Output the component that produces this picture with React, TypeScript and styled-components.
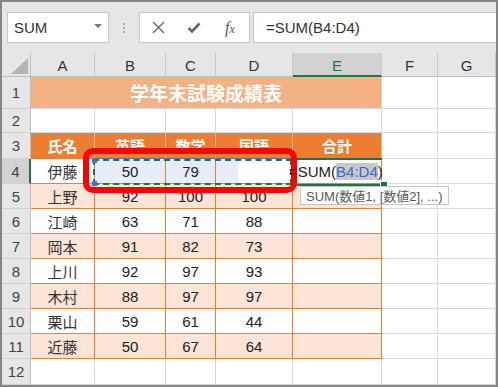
import React from "react";
import styled, { createGlobalStyle } from "styled-components";

const FONT = `"Liberation Sans", "Noto Sans CJK JP", sans-serif`;
const JP = `"Noto Sans CJK JP", "Liberation Sans", sans-serif`;

const GREEN = "#217346";
const ORANGE = "#ed7d31";
const PEACH = "#fce4d6";
const TITLE = "#f4b183";
const GRID = "#d9d9d9";

const GlobalStyle = createGlobalStyle`
  body { margin: 0; background: #fff; }
  * { box-sizing: border-box; }
`;

const Frame = styled.div`
  width: 498px;
  height: 387px;
  border: 2px solid #858585;
  background: #fff;
  overflow: hidden;
  font-family: ${FONT};
`;

const Toolbar = styled.div`
  height: 51px;
  background: #e6e6e6;
  display: flex;
  align-items: flex-start;
  padding: 10px 0 0 5px;
`;

const NameBox = styled.div`
  width: 102px;
  height: 31px;
  background: #fff;
  border: 1px solid #c6c6c6;
  display: flex;
  align-items: center;
  justify-content: space-between;
  padding: 0 6px 0 6px;
  font-size: 15px;
  color: #333;
`;

const Caret = styled.span`
  width: 0;
  height: 0;
  border-left: 4px solid transparent;
  border-right: 4px solid transparent;
  border-top: 4px solid #777;
  margin-bottom: 3px;
`;

const Grip = styled.div`
  width: 30px;
  height: 31px;
  display: flex;
  flex-direction: column;
  align-items: center;
  justify-content: center;
  gap: 2px;
  span {
    width: 2px;
    height: 2px;
    background: #aaa;
  }
`;

const IconBox = styled.div`
  width: 111px;
  height: 31px;
  background: #fff;
  border: 1px solid #c6c6c6;
  display: flex;
  align-items: center;
`;

const IconSlot = styled.div`
  width: 36px;
  height: 100%;
  display: flex;
  align-items: center;
  justify-content: center;
  color: #666;
`;

const Fx = styled.span`
  font-family: "Liberation Serif", serif;
  font-style: italic;
  font-size: 16px;
  color: #555;
  small {
    font-size: 12px;
  }
`;

const FormulaBox = styled.div`
  flex: 1;
  height: 31px;
  margin-left: 3px;
  background: #fff;
  border: 1px solid #c6c6c6;
  border-right: none;
  display: flex;
  align-items: center;
  padding-left: 12px;
  font-size: 15px;
  color: #333;
`;

const Sheet = styled.div`
  position: relative;
  display: grid;
  grid-template-columns: 29px 64px 71px 50px 77px 89px 56px 58px;
  grid-template-rows: 24px 32px 24px 26px repeat(8, 25px) 26px;
`;

const Corner = styled.div`
  background: #e6e6e6;
  border-right: 1px solid #bdbdbd;
  border-bottom: 1px solid #bdbdbd;
  display: flex;
  align-items: flex-end;
  justify-content: flex-end;
  padding: 0 2px 2px 0;
  span {
    width: 0;
    height: 0;
    border-left: 17px solid transparent;
    border-bottom: 16px solid #b4b4b4;
  }
`;

const ColHead = styled.div<{ $active?: boolean }>`
  background: ${(p) => (p.$active ? "#d2d2d2" : "#e6e6e6")};
  border-right: 1px solid #c8c8c8;
  border-bottom: ${(p) => (p.$active ? `2px solid ${GREEN}` : "1px solid #bdbdbd")};
  color: ${(p) => (p.$active ? GREEN : "#333")};
  display: flex;
  align-items: center;
  justify-content: center;
  font-size: 15px;
  padding-top: 2px;
`;

const RowHead = styled.div<{ $active?: boolean }>`
  background: ${(p) => (p.$active ? "#d2d2d2" : "#e6e6e6")};
  border-right: ${(p) => (p.$active ? `2px solid ${GREEN}` : "1px solid #bdbdbd")};
  border-bottom: 1px solid #d0d0d0;
  color: #444;
  display: flex;
  align-items: center;
  justify-content: center;
  font-size: 15px;
`;

const Cell = styled.div<{ $bg?: string; $line?: string; $left?: boolean }>`
  display: flex;
  align-items: center;
  justify-content: ${(p) => (p.$left ? "flex-start" : "center")};
  background: ${(p) => p.$bg ?? "#fff"};
  border-right: 1px solid ${(p) => p.$line ?? GRID};
  border-bottom: 1px solid ${(p) => p.$line ?? GRID};
  color: #222;
  font-size: 15px;
  white-space: nowrap;
  min-width: 0;
`;

const Name = styled.span`
  font-family: ${JP};
  color: #333;
`;

const TitleCell = styled.div`
  grid-column: 2 / span 5;
  background: ${TITLE};
  border-bottom: 1px solid ${GRID};
  border-right: 1px solid ${GRID};
  display: flex;
  align-items: center;
  justify-content: center;
  color: #fff;
  font-family: ${JP};
  font-weight: 700;
  font-size: 19px;
`;

const HeadCell = styled.div`
  background: ${ORANGE};
  border-right: 1px solid #f6b48a;
  border-bottom: 1px solid ${ORANGE};
  display: flex;
  align-items: center;
  justify-content: center;
  color: #fff;
  font-family: ${JP};
  font-weight: 700;
  font-size: 15px;
`;

const Editor = styled.span`
  margin-left: -4px;
  color: #222;
  position: relative;
  z-index: 5;
`;

const Ref = styled.span`
  color: #2f6fc9;
  background: #c8c8c8;
`;

const RangeBox = styled.div`
  position: absolute;
  left: 91px;
  top: 105px;
  width: 200px;
  height: 27px;
  border-top: 1px solid #4472c4;
  border-right: 1px solid #4472c4;
  z-index: 2;
  &::after {
    content: "";
    position: absolute;
    inset: 0 0 0 0;
    border: 2px dashed ${GREEN};
  }
`;

const Handle = styled.span<{ $top: boolean }>`
  position: absolute;
  left: -1px;
  ${(p) => (p.$top ? "top: -1px;" : "bottom: -1px;")}
  width: 5px;
  height: 5px;
  background: #4472c4;
  z-index: 1;
`;

const ActiveLine = styled.div<{ $top: number }>`
  position: absolute;
  left: 291px;
  top: ${(p) => p.$top}px;
  width: 89px;
  height: 2px;
  background: ${GREEN};
  z-index: 2;
`;

const FillHandle = styled.div`
  position: absolute;
  left: 379px;
  top: 129px;
  width: 6px;
  height: 6px;
  background: ${GREEN};
  outline: 1px solid #fff;
  z-index: 3;
`;

const Marker = styled.div`
  position: absolute;
  left: 81px;
  top: 95px;
  width: 214px;
  height: 45px;
  border: 6px solid #ff0000;
  border-radius: 10px;
  z-index: 4;
`;

const Tip = styled.div`
  position: absolute;
  left: 298px;
  top: 133px;
  height: 19px;
  padding: 0 5px;
  background: #fff;
  border: 1px solid #c6c6c6;
  display: flex;
  align-items: center;
  font-size: 13px;
  color: #595959;
  font-family: ${FONT};
  white-space: nowrap;
  z-index: 4;
`;

const cols = ["A", "B", "C", "D", "E", "F", "G"];
const heads = ["氏名", "英語", "数学", "国語", "合計"];
const rows: [string, number, number, number][] = [
  ["上野", 92, 100, 100],
  ["江崎", 63, 71, 88],
  ["岡本", 91, 82, 73],
  ["上川", 92, 97, 93],
  ["木村", 88, 97, 97],
  ["栗山", 59, 61, 44],
  ["近藤", 50, 67, 64],
];
const SEL = "#e7edf8";

const Blank = () => (
  <>
    <Cell />
    <Cell />
  </>
);

export default function App() {
  return (
    <Frame>
      <GlobalStyle />
      <Toolbar>
        <NameBox>
          SUM
          <Caret />
        </NameBox>
        <Grip>
          <span />
          <span />
          <span />
        </Grip>
        <IconBox>
          <IconSlot>
            <svg width="13" height="13" viewBox="0 0 13 13">
              <path d="M1 1 L12 12 M12 1 L1 12" stroke="#666" strokeWidth="1.4" />
            </svg>
          </IconSlot>
          <IconSlot>
            <svg width="14" height="12" viewBox="0 0 14 12">
              <path d="M1.5 6 L5 9.5 L12.5 1.5" stroke="#666" strokeWidth="2.6" fill="none" />
            </svg>
          </IconSlot>
          <IconSlot>
            <Fx>
              f<small>x</small>
            </Fx>
          </IconSlot>
        </IconBox>
        <FormulaBox>=SUM(B4:D4)</FormulaBox>
      </Toolbar>
      <Sheet>
        <Corner>
          <span />
        </Corner>
        {cols.map((c) => (
          <ColHead key={c} $active={c === "E"}>
            {c}
          </ColHead>
        ))}

        <RowHead>1</RowHead>
        <TitleCell>学年末試験成績表</TitleCell>
        <Blank />

        <RowHead>2</RowHead>
        {cols.map((c) => (
          <Cell key={c} />
        ))}

        <RowHead>3</RowHead>
        {heads.map((h) => (
          <HeadCell key={h}>{h}</HeadCell>
        ))}
        <Blank />

        <RowHead $active>4</RowHead>
        <Cell $line={ORANGE}>
          <Name>伊藤</Name>
        </Cell>
        <Cell $line={ORANGE} $bg={SEL}>50</Cell>
        <Cell $line={ORANGE} $bg={SEL}>79</Cell>
        <Cell $line={ORANGE} $bg={`linear-gradient(to right, ${SEL} 22px, #fff 22px)`} />
        <Cell $line={ORANGE} $left>
          <Editor>
            =SUM(<Ref>B4:D4</Ref>)
          </Editor>
        </Cell>
        <Blank />

        {rows.map(([name, en, ma, ja], i) => {
          const bg = i % 2 === 0 ? PEACH : "#fff";
          return (
            <React.Fragment key={name}>
              <RowHead>{i + 5}</RowHead>
              <Cell $line={ORANGE} $bg={bg}>
                <Name>{name}</Name>
              </Cell>
              <Cell $line={ORANGE} $bg={bg}>{en}</Cell>
              <Cell $line={ORANGE} $bg={bg}>{ma}</Cell>
              <Cell $line={ORANGE} $bg={bg}>{ja}</Cell>
              <Cell $line={ORANGE} $bg={bg} />
              <Blank />
            </React.Fragment>
          );
        })}

        <RowHead>12</RowHead>
        {cols.map((c) => (
          <Cell key={c} />
        ))}

        <RangeBox>
          <Handle $top />
          <Handle $top={false} />
        </RangeBox>
        <ActiveLine $top={105} />
        <ActiveLine $top={131} />
        <FillHandle />
        <Marker />
        <Tip>SUM(数値1, [数値2], ...)</Tip>
      </Sheet>
    </Frame>
  );
}
